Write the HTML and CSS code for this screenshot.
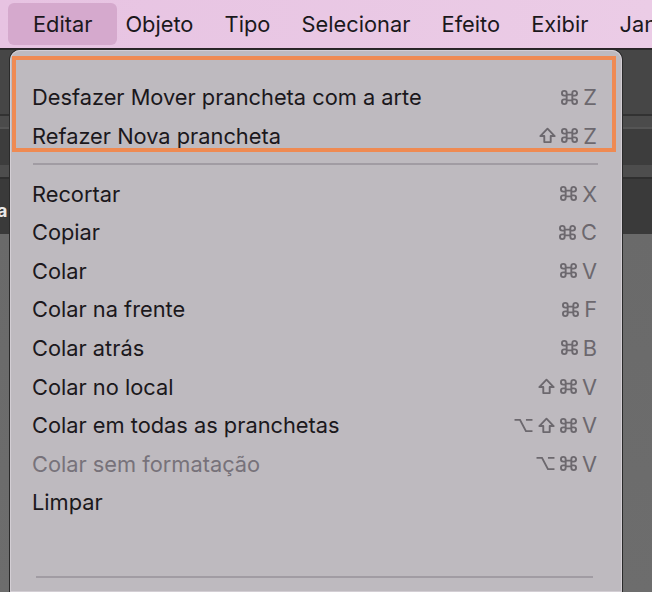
FILE: index.html
```html
<!DOCTYPE html>
<html lang="pt">
  <head>
    <meta charset="UTF-8" />
    <meta name="viewport" content="width=device-width, initial-scale=1.0" />
    <title>Editar</title>
    <link rel="stylesheet" href="styles.css">
  </head>
  <body>
    <div class="desktop">
      <span class="stray">a</span>
    </div>

    <div class="menubar">
      <span class="menubarItem active">Editar</span>
      <span class="menubarItem">Objeto</span>
      <span class="menubarItem">Tipo</span>
      <span class="menubarItem">Selecionar</span>
      <span class="menubarItem">Efeito</span>
      <span class="menubarItem">Exibir</span>
      <span class="menubarItem">Janela</span>
    </div>

    <!-- key glyphs, reused below -->
    <svg width="0" height="0" style="position:absolute">
      <defs>
        <g id="cmd" fill="none" stroke="currentColor" stroke-width="2">
          <path d="M6 6V4.5a2.5 2.5 0 1 0-2.5 2.5H6zM12 6V4.5a2.5 2.5 0 1 1 2.5 2.5H12zM6 12v1.5a2.5 2.5 0 1 1-2.5-2.5H6zM12 12v1.5a2.5 2.5 0 1 0 2.5-2.5H12zM6 6h6v6H6z" />
        </g>
        <g id="shift" fill="none" stroke="currentColor" stroke-width="2" stroke-linejoin="round">
          <path d="M9 1.8L16.6 9.6H12.4V16H5.6V9.6H1.4Z" />
        </g>
        <g id="opt" fill="none" stroke="currentColor" stroke-width="2">
          <path d="M0.5 3H6.3L12.6 15H19.5M12.6 3H19.5" />
        </g>
      </defs>
    </svg>

    <div class="menu">
      <div class="annotation"></div>

      <div class="item">
        <span>Desfazer Mover prancheta com a arte</span>
        <span class="keys"><svg class="sym" viewBox="0 0 18 18"><use href="#cmd" /></svg><span>Z</span></span>
      </div>
      <div class="item">
        <span>Refazer Nova prancheta</span>
        <span class="keys"><svg class="sym" viewBox="0 0 18 18"><use href="#shift" /></svg><svg class="sym" viewBox="0 0 18 18"><use href="#cmd" /></svg><span>Z</span></span>
      </div>

      <div class="separator"></div>

      <div class="item">
        <span>Recortar</span>
        <span class="keys"><svg class="sym" viewBox="0 0 18 18"><use href="#cmd" /></svg><span>X</span></span>
      </div>
      <div class="item">
        <span>Copiar</span>
        <span class="keys"><svg class="sym" viewBox="0 0 18 18"><use href="#cmd" /></svg><span>C</span></span>
      </div>
      <div class="item">
        <span>Colar</span>
        <span class="keys"><svg class="sym" viewBox="0 0 18 18"><use href="#cmd" /></svg><span>V</span></span>
      </div>
      <div class="item">
        <span>Colar na frente</span>
        <span class="keys"><svg class="sym" viewBox="0 0 18 18"><use href="#cmd" /></svg><span>F</span></span>
      </div>
      <div class="item">
        <span>Colar atrás</span>
        <span class="keys"><svg class="sym" viewBox="0 0 18 18"><use href="#cmd" /></svg><span>B</span></span>
      </div>
      <div class="item">
        <span>Colar no local</span>
        <span class="keys"><svg class="sym" viewBox="0 0 18 18"><use href="#shift" /></svg><svg class="sym" viewBox="0 0 18 18"><use href="#cmd" /></svg><span>V</span></span>
      </div>
      <div class="item">
        <span>Colar em todas as pranchetas</span>
        <span class="keys"><svg class="sym wide" viewBox="0 0 20 18"><use href="#opt" /></svg><svg class="sym" viewBox="0 0 18 18"><use href="#shift" /></svg><svg class="sym" viewBox="0 0 18 18"><use href="#cmd" /></svg><span>V</span></span>
      </div>
      <div class="item disabled">
        <span>Colar sem formatação</span>
        <span class="keys"><svg class="sym wide" viewBox="0 0 20 18"><use href="#opt" /></svg><svg class="sym" viewBox="0 0 18 18"><use href="#cmd" /></svg><span>V</span></span>
      </div>
      <div class="item">
        <span>Limpar</span>
      </div>

      <div class="separator bottom"></div>
    </div>
  </body>
</html>
```

FILE: styles.css
```css
html,
body {
  margin: 0;
  height: 100%;
}
body {
  width: 652px;
  height: 592px;
  overflow: hidden;
  font-family: Inter, "Noto Sans", sans-serif;
  color: #1b181c;
  background: linear-gradient(
    to bottom,
    #2a2a2a 0,
    #2a2a2a 50px,
    #464646 50px,
    #464646 114px,
    #323232 114px,
    #323232 116px,
    #4b4b4b 116px,
    #4b4b4b 127px,
    #555 127px,
    #555 129px,
    #3d3d3d 129px,
    #3d3d3d 165px,
    #4d4d4d 165px,
    #4d4d4d 177px,
    #2f2f2f 177px,
    #2f2f2f 179px,
    #3a3a3a 179px,
    #3a3a3a 234px,
    #6a6a6a 234px,
    #6d6d6d 100%
  );
}

.desktop {
  position: absolute;
  left: 0;
  top: 0;
  width: 652px;
  height: 592px;
}
.stray {
  position: absolute;
  left: -3px;
  top: 200px;
  font-size: 18px;
  font-weight: 700;
  color: #e8e8e8;
}

.menubar {
  position: relative;
  display: flex;
  align-items: center;
  height: 48px;
  padding-left: 8px;
  white-space: nowrap;
  overflow: hidden;
  font-size: 21.8px;
  background: linear-gradient(to right, #e7c3e2, #ebcce6);
  border-bottom: 1px solid #2a2328;
}
.menubarItem {
  padding: 0 15.6px;
  line-height: 42px;
}
.menubarItem.active {
  padding: 0 25px;
  margin-right: -7.6px;
  border-radius: 6px;
  background-color: #d5a9cd;
}

.menu {
  position: relative;
  width: 612px;
  height: 542px;
  margin: 1px 0 0 10px;
  padding-top: 28px;
  box-sizing: border-box;
  border-radius: 10px 10px 0 0;
  background-color: #bebabf;
  box-shadow: inset 0 0 0 1px #d3ced4, 0 0 0 1px #2a2a2a;
  font-size: 21.8px;
}

.annotation {
  position: absolute;
  left: 2px;
  top: 6px;
  width: 604px;
  height: 96px;
  box-sizing: border-box;
  border: 4px solid #ef8a52;
}

.item {
  display: flex;
  align-items: center;
  justify-content: space-between;
  height: 38.6px;
  padding: 0 25px 0 22px;
}
.item.disabled {
  color: #77727a;
}

.keys {
  display: flex;
  align-items: center;
  gap: 5px;
  color: #6c686e;
}
.sym {
  width: 17px;
  height: 17px;
}
.sym.wide {
  width: 19px;
}

.separator {
  height: 2px;
  margin: 7.6px 24px 9.5px 23px;
  background-color: #a19ca3;
}
.separator.bottom {
  margin: 54px 29px 0 26px;
}
```
